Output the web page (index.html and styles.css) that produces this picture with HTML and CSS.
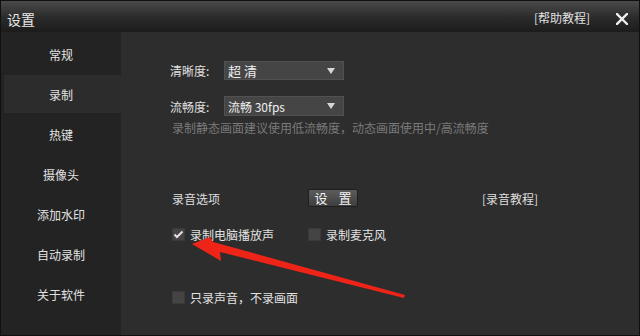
FILE: index.html
```html
<!DOCTYPE html>
<html lang="zh-CN">
<head>
<meta charset="utf-8">
<title>设置</title>
<link rel="stylesheet" href="styles.css">
</head>
<body>
<div class="window">
  <div class="titlebar">
    <span class="title">设置</span>
    <span class="help">[帮助教程]</span>
    <span class="close">
      <svg width="12" height="12" viewBox="0 0 12 12"><path d="M1 1 L11 11 M11 1 L1 11" stroke="#eeeeee" stroke-width="2.4" stroke-linecap="square"/></svg>
    </span>
  </div>
  <div class="main">
    <div class="sidebar">
      <div class="nav-item">常规</div>
      <div class="nav-item active">录制</div>
      <div class="nav-item">热键</div>
      <div class="nav-item">摄像头</div>
      <div class="nav-item">添加水印</div>
      <div class="nav-item">自动录制</div>
      <div class="nav-item">关于软件</div>
    </div>
    <div class="content">
      <div class="field first">
        <span class="label">清晰度:</span>
        <div class="select"><span class="value wide">超 清</span><span class="caret"></span></div>
      </div>
      <div class="field second">
        <span class="label">流畅度:</span>
        <div class="select"><span class="value">流畅 30fps</span><span class="caret"></span></div>
      </div>
      <div class="hint">录制静态画面建议使用低流畅度，动态画面使用中/高流畅度</div>
      <div class="audio">
        <span class="audio-label">录音选项</span>
        <button class="btn">设 置</button>
        <span class="link">[录音教程]</span>
      </div>
      <div class="checks">
        <label class="check"><span class="box checked"><svg width="11" height="9" viewBox="0 0 11 9"><path d="M1.5 4.5 L4 7 L9.5 1.5" fill="none" stroke="#eadede" stroke-width="2"/></svg></span><span class="check-text">录制电脑播放声</span></label>
        <label class="check second-check"><span class="box"></span><span class="check-text">录制麦克风</span></label>
      </div>
      <div class="checks last">
        <label class="check"><span class="box"></span><span class="check-text">只录声音，不录画面</span></label>
      </div>
    </div>
  </div>
  <svg class="arrow" width="640" height="336" viewBox="0 0 640 336">
    <polygon points="192,244 210,237 213,242 405,295 404,298 220,252 221,261" fill="#ee2418"/>
  </svg>
</div>
</body>
</html>
```

FILE: styles.css
```css
* { box-sizing: border-box; }
html, body { margin: 0; padding: 0; background: #2d2d2d; }
body {
  font-family: "Noto Sans CJK SC", "DejaVu Sans", sans-serif;
  font-size: 12px;
  color: #dcdcdc;
}
.window {
  position: relative;
  width: 640px;
  height: 336px;
  border: 1px solid #101010;
  display: flex;
  flex-direction: column;
  overflow: hidden;
}
.titlebar {
  height: 31px;
  flex: none;
  display: flex;
  align-items: center;
  background: linear-gradient(#4a4a4a, #2a2a2a 55%, #1c1c1c);
  padding-left: 6px;
  padding-right: 11px;
}
.title {
  font-size: 14px;
  color: #e8e8e8;
  line-height: 14px;
  margin-top: 5px;
}
.help {
  margin-left: auto;
  font-size: 12px;
  color: #e0e0e0;
  line-height: 14px;
  margin-top: 2px;
}
.close {
  display: flex;
  margin-left: 26px;
  margin-top: 4px;
}
.main {
  flex: 1;
  display: flex;
  min-height: 0;
}
.sidebar {
  width: 120px;
  flex: none;
  background: #232323;
  padding-top: 3px;
  display: flex;
  flex-direction: column;
  gap: 2px;
}
.nav-item {
  height: 38px;
  margin-left: 3px;
  display: flex;
  align-items: center;
  justify-content: center;
  padding-right: 3px;
  color: #e2e2e2;
  font-size: 12px;
}
.nav-item.active { background: #2c2c2c; }
.content {
  flex: 1;
  background: #2d2d2d;
  padding: 29px 0 0 49px;
  display: flex;
  flex-direction: column;
  align-items: flex-start;
}
.field {
  display: flex;
  align-items: center;
  height: 19px;
}
.field.second { margin-top: 16px; height: 20px; }
.label {
  width: 54px;
  color: #e0e0e0;
}
.select {
  width: 120px;
  height: 100%;
  background: #454545;
  border: 1px solid #515151;
  display: flex;
  align-items: center;
  padding-left: 3px;
  padding-right: 8px;
}
.value { font-size: 12px; color: #f0f0f0; }
.value.wide { font-size: 13px; }
.caret {
  margin-left: auto;
  width: 0;
  height: 0;
  border-left: 4px solid transparent;
  border-right: 4px solid transparent;
  border-top: 6px solid #d6d6d6;
}
.hint {
  margin-top: 4px;
  padding-left: 2px;
  line-height: 16px;
  color: #7a7a7a;
}
.audio {
  margin-top: 53px;
  height: 18px;
  display: flex;
  align-items: center;
  padding-left: 2px;
}
.audio-label { width: 136px; color: #dedede; }
.btn {
  width: 50px;
  height: 18px;
  padding: 0;
  border: 1px solid #1e1e1e;
  border-radius: 2px;
  background: linear-gradient(#5c5c5c, #3e3e3e);
  color: #f0f0f0;
  font-family: inherit;
  font-size: 13px;
  line-height: 16px;
  letter-spacing: 4px;
  text-indent: 4px;
}
.link { margin-left: 124px; color: #dedede; }
.checks {
  margin-top: 20px;
  display: flex;
  align-items: center;
  padding-left: 2px;
  height: 14px;
}
.checks.last { margin-top: 49px; }
.check {
  display: flex;
  align-items: center;
  width: 136px;
}
.check.second-check { width: auto; }
.box {
  width: 13px;
  height: 13px;
  background: #444444;
  border: 1px solid #3a3a3a;
  display: flex;
  align-items: center;
  justify-content: center;
  flex: none;
}
.check-text { margin-left: 5px; color: #e2e2e2; }
.arrow {
  position: absolute;
  left: -1px;
  top: -1px;
  pointer-events: none;
}
```
